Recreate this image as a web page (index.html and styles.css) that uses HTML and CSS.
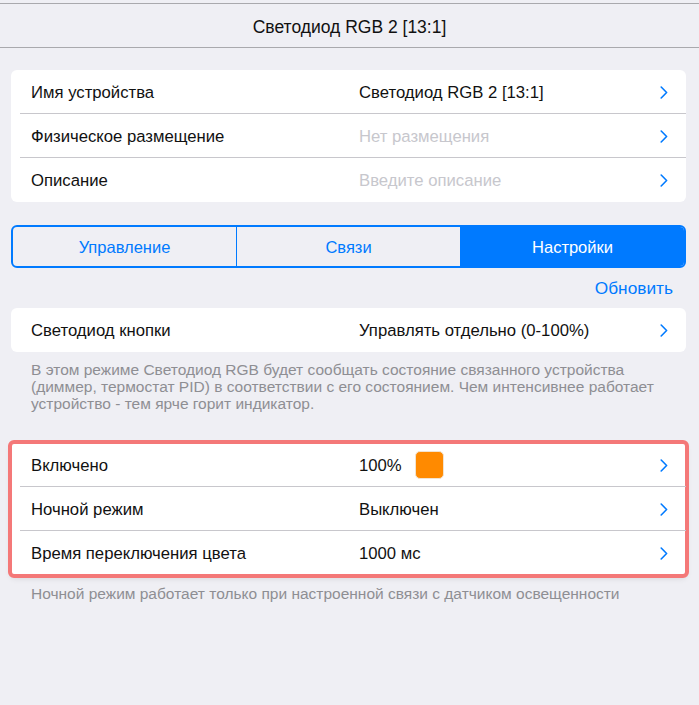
FILE: index.html
```html
<!DOCTYPE html>
<html lang="ru">
<head>
<meta charset="utf-8">
<title>Светодиод RGB 2 [13:1]</title>
<link rel="stylesheet" href="styles.css">
</head>
<body>
<header class="topbar">Светодиод RGB 2 [13:1]</header>
<main class="content">
  <section class="card">
    <div class="row">
      <span class="label">Имя устройства</span>
      <span class="value">Светодиод RGB 2 [13:1]</span>
      <svg class="chev" viewBox="0 0 8 13" width="8" height="13"><polyline points="1.2,1 6.6,6.5 1.2,12"/></svg>
    </div>
    <div class="row">
      <span class="label">Физическое размещение</span>
      <span class="value placeholder">Нет размещения</span>
      <svg class="chev" viewBox="0 0 8 13" width="8" height="13"><polyline points="1.2,1 6.6,6.5 1.2,12"/></svg>
    </div>
    <div class="row">
      <span class="label">Описание</span>
      <span class="value placeholder">Введите описание</span>
      <svg class="chev" viewBox="0 0 8 13" width="8" height="13"><polyline points="1.2,1 6.6,6.5 1.2,12"/></svg>
    </div>
  </section>

  <nav class="segmented">
    <span class="seg">Управление</span>
    <span class="seg">Связи</span>
    <span class="seg active">Настройки</span>
  </nav>

  <div class="refresh"><span>Обновить</span></div>

  <section class="card">
    <div class="row">
      <span class="label">Светодиод кнопки</span>
      <span class="value">Управлять отдельно (0-100%)</span>
      <svg class="chev" viewBox="0 0 8 13" width="8" height="13"><polyline points="1.2,1 6.6,6.5 1.2,12"/></svg>
    </div>
  </section>
  <p class="note">В этом режиме Светодиод RGB будет сообщать состояние связанного устройства<br>(диммер, термостат PID) в соответствии с его состоянием. Чем интенсивнее работает<br>устройство - тем ярче горит индикатор.</p>

  <section class="card highlighted">
    <div class="row">
      <span class="label">Включено</span>
      <span class="value">100% <span class="swatch"></span></span>
      <svg class="chev" viewBox="0 0 8 13" width="8" height="13"><polyline points="1.2,1 6.6,6.5 1.2,12"/></svg>
    </div>
    <div class="row">
      <span class="label">Ночной режим</span>
      <span class="value">Выключен</span>
      <svg class="chev" viewBox="0 0 8 13" width="8" height="13"><polyline points="1.2,1 6.6,6.5 1.2,12"/></svg>
    </div>
    <div class="row">
      <span class="label">Время переключения цвета</span>
      <span class="value">1000 мс</span>
      <svg class="chev" viewBox="0 0 8 13" width="8" height="13"><polyline points="1.2,1 6.6,6.5 1.2,12"/></svg>
    </div>
  </section>
  <p class="note">Ночной режим работает только при настроенной связи с датчиком освещенности</p>
</main>
</body>
</html>
```

FILE: styles.css
```css
* { box-sizing: border-box; }

html, body {
  margin: 0;
  padding: 0;
  background: #efeff4;
  font-family: "Liberation Sans", Arial, sans-serif;
  color: #111;
}

.topbar {
  margin-top: 3px;
  height: 45px;
  padding-top: 3px;
  border-top: 1px solid #a9a9ad;
  border-bottom: 1px solid #a9a9ad;
  display: flex;
  align-items: center;
  justify-content: center;
  font-size: 17.5px;
  color: #111;
}

.content {
  padding: 22px 13px 0 11px;
}

.card {
  background: #fff;
  border-radius: 6px;
}

.row {
  height: 44px;
  display: flex;
  align-items: center;
  padding: 2px 18px 0 20px;
  font-size: 16.7px;
  position: relative;
}

.row + .row::before {
  content: "";
  position: absolute;
  top: -1px;
  left: 9px;
  right: 0;
  height: 1px;
  background: #c8c7cc;
}

.label {
  width: 328px;
  flex: none;
  white-space: nowrap;
}

.value {
  flex: 1;
  display: flex;
  align-items: center;
  white-space: nowrap;
}

.placeholder { color: #c7c7cd; }

.chev {
  flex: none;
  margin-top: -2px;
  fill: none;
  stroke: #007aff;
  stroke-width: 1.6;
  stroke-linecap: round;
  stroke-linejoin: round;
}

.swatch {
  display: inline-block;
  width: 29px;
  height: 28px;
  margin: -2px 0 0 13px;
  border-radius: 5px;
  background: #ff8a00;
  border: 1px solid #f2e3d0;
}

.segmented {
  margin-top: 23px;
  height: 43px;
  display: flex;
  border: 2px solid #007aff;
  border-radius: 6px;
  overflow: hidden;
}

.seg {
  flex: 1;
  display: flex;
  align-items: center;
  justify-content: center;
  padding-top: 1px;
  font-size: 16.5px;
  color: #007aff;
}

.seg + .seg { border-left: 1px solid #007aff; }

.seg.active {
  background: #007aff;
  color: #fff;
}

.refresh {
  height: 40px;
  display: flex;
  align-items: center;
  justify-content: flex-end;
  padding-right: 13px;
  font-size: 17.3px;
  color: #007aff;
}

.note {
  margin: 9px 0 0;
  padding: 0 10px 0 20px;
  font-size: 15.5px;
  line-height: 17px;
  color: #8e8e93;
  white-space: nowrap;
}

.highlighted {
  margin-top: 31px;
  border-radius: 3px;
  outline: 4px solid #f47878;
  outline-offset: -1px;
  box-shadow: 0 3px 6px rgba(0, 0, 0, 0.12);
}

.highlighted + .note { margin-top: 10px; }
```
